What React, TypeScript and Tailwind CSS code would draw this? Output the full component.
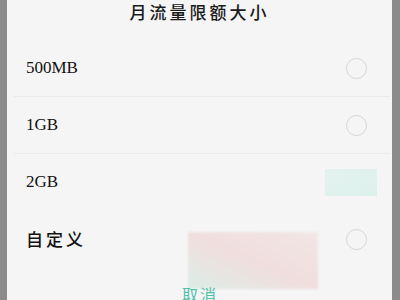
import React from 'react';

const options = [
  { label: '500MB', cjk: false },
  { label: '1GB', cjk: false },
  { label: '2GB', cjk: false },
  { label: '自定义', cjk: true },
];

const Radio = () => (
  <span className="block w-[21px] h-[21px] rounded-full border-[1.5px] border-[#d6d6d6]" />
);

export default function App() {
  return (
    <div className="w-[400px] h-[300px] bg-[#8b8b8b] flex overflow-hidden">
      <div className="ml-[7px] w-[385px] h-[300px] bg-[#f5f5f5] flex flex-col relative">
        <div
          className="h-[24px] flex items-center justify-center text-[17px] font-medium tracking-[3px] text-[#1a1a1a]"
          style={{ fontFamily: '"Noto Sans CJK SC", sans-serif' }}
        >
          月流量限额大小
        </div>
        <div className="h-[16px]" />
        {options.map((o, i) => (
          <div key={o.label}>
            <div className="h-[56px] flex items-center justify-between pl-[19px] pr-[25px]">
              <span
                className={
                  o.cjk
                    ? 'text-[17px] font-medium tracking-[3px] text-[#111111]'
                    : 'text-[17px] text-[#111111]'
                }
                style={{
                  fontFamily: o.cjk
                    ? '"Noto Sans CJK SC", sans-serif'
                    : '"Liberation Serif", serif',
                }}
              >
                {o.label}
              </span>
              {i === 2 ? (
                <span className="block w-[52px] h-[27px] -mr-[10px] bg-gradient-to-br from-[#e4f2ef] to-[#dcf1ec]" />
              ) : (
                <Radio />
              )}
            </div>
            {i < 2 && <div className="h-px bg-[#ebebeb] ml-[7px] mr-[2px]" />}
            {i === 2 && <div className="h-px" />}
          </div>
        ))}
        <div className="absolute left-[181px] top-[232px] w-[130px] h-[57px] bg-gradient-to-tr from-[#dcece6] via-[#f0dede] to-[#f3e6e6] blur-[1px]" />
        <div
          className="absolute left-[175px] top-[282px] text-[16px] tracking-[2px] text-[#4fc2a8]"
          style={{ fontFamily: '"Noto Sans CJK SC", sans-serif' }}
        >
          取消
        </div>
      </div>
    </div>
  );
}
